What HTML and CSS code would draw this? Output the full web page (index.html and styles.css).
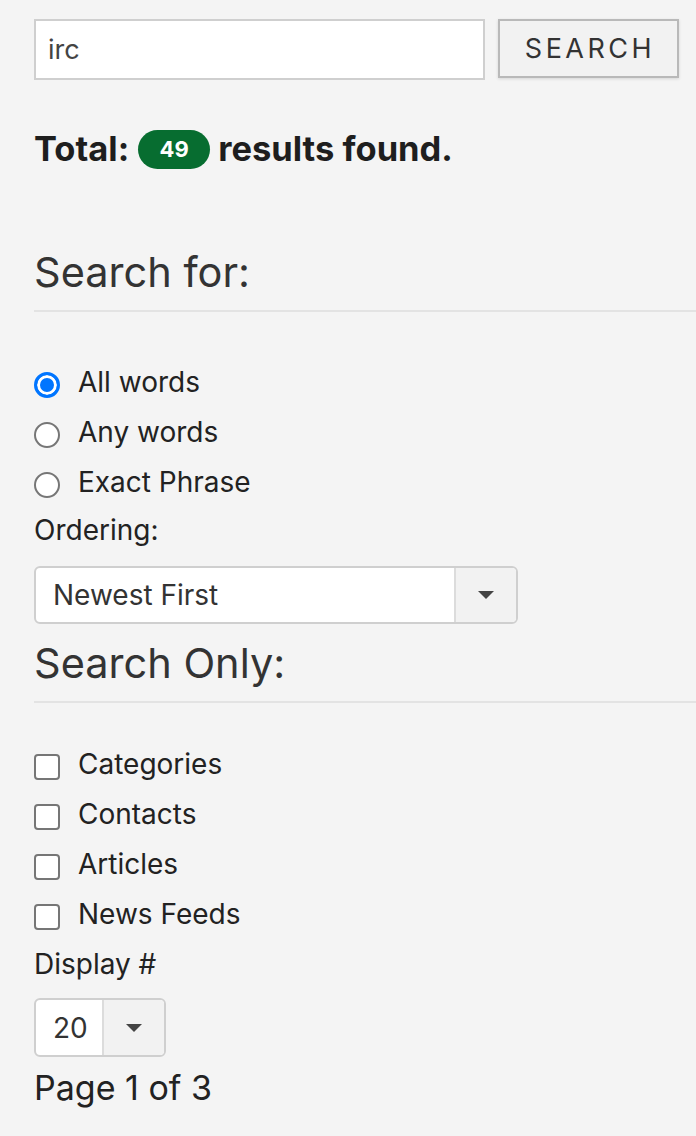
FILE: index.html
```html
<!DOCTYPE html>
<html lang="en">
<head>
<meta charset="utf-8">
<title>Search</title>
<link rel="stylesheet" href="styles.css">
</head>
<body>
<div class="page">
  <form class="search-row">
    <input class="search-input" type="text" value="irc">
    <button class="search-btn" type="button">SEARCH</button>
  </form>

  <p class="total">Total: <span class="badge">49</span> results found.</p>

  <h2 class="section-title">Search for:</h2>
  <hr class="rule">

  <div class="options first">
    <label class="opt"><span class="radio checked"></span>All words</label>
    <label class="opt"><span class="radio"></span>Any words</label>
    <label class="opt"><span class="radio"></span>Exact Phrase</label>
  </div>

  <div class="field-label">Ordering:</div>
  <div class="select wide">
    <span class="select-value">Newest First</span>
    <span class="select-caret"><span class="tri"></span></span>
  </div>

  <h2 class="section-title only">Search Only:</h2>
  <hr class="rule">

  <div class="options second">
    <label class="opt"><span class="check"></span>Categories</label>
    <label class="opt"><span class="check"></span>Contacts</label>
    <label class="opt"><span class="check"></span>Articles</label>
    <label class="opt"><span class="check"></span>News Feeds</label>
  </div>

  <div class="field-label display">Display #</div>
  <div class="select narrow">
    <span class="select-value">20</span>
    <span class="select-caret"><span class="tri"></span></span>
  </div>

  <div class="pages">Page 1 of 3</div>
</div>
</body>
</html>
```

FILE: styles.css
```css
html, body {
  margin: 0;
  padding: 0;
  background: #f4f4f4;
}

body {
  font-family: Inter, "Noto Sans", sans-serif;
  color: #222;
}

.page {
  padding: 19px 0 0 34px;
  overflow: hidden;
}

.search-row {
  display: flex;
  gap: 13px;
  align-items: flex-start;
  margin: 0;
}

.search-input {
  box-sizing: border-box;
  width: 451px;
  height: 61px;
  border: 2px solid #cfcfcf;
  background: #fff;
  font-family: Inter, sans-serif;
  font-size: 27px;
  color: #444;
  padding: 0 12px;
  outline: none;
}

.search-btn {
  box-sizing: border-box;
  width: 181px;
  height: 59px;
  border: 2px solid #b9b9b9;
  background: #f2f2f2;
  font-family: Inter, sans-serif;
  font-size: 27px;
  letter-spacing: 3.5px;
  text-indent: 3px;
  color: #333;
  box-shadow: 0 1px 3px rgba(0, 0, 0, 0.12);
  padding: 0;
}

.total {
  margin: 49px 0 0;
  font-size: 34.5px;
  line-height: 40px;
  font-weight: 700;
  color: #1e1e1e;
  display: flex;
  align-items: center;
}

.badge {
  display: inline-flex;
  align-items: center;
  justify-content: center;
  width: 72px;
  height: 39px;
  border-radius: 20px;
  background: #076d30;
  color: #fff;
  font-size: 22px;
  font-weight: 700;
  margin: 0 8px 0 9px;
}

.section-title {
  margin: 79px 0 0;
  font-size: 41.5px;
  line-height: 48px;
  font-weight: 400;
  color: #333;
}

.section-title.only {
  margin-top: 15px;
}

.rule {
  border: 0;
  border-top: 2px solid #e3e3e3;
  margin: 14px 0 0;
}

.options.first {
  margin-top: 48px;
}

.options.second {
  margin-top: 39px;
}

.opt {
  box-sizing: border-box;
  display: flex;
  align-items: center;
  height: 50px;
  padding-bottom: 6px;
  font-size: 28px;
  color: #222;
}

.radio {
  box-sizing: border-box;
  width: 26px;
  height: 26px;
  border-radius: 50%;
  border: 2px solid #767676;
  background: #fff;
  margin: 6px 18px 0 0;
  flex: none;
}

.radio.checked {
  border: 3px solid #0075ff;
  background: #0075ff;
  box-shadow: inset 0 0 0 3px #fff;
}

.check {
  box-sizing: border-box;
  width: 26px;
  height: 26px;
  border-radius: 4px;
  border: 2px solid #767676;
  background: #fff;
  margin: 6px 18px 0 0;
  flex: none;
}

.field-label {
  font-size: 28px;
  line-height: 40px;
  color: #222;
}

.field-label.display {
  margin-top: 2px;
}

.select {
  box-sizing: border-box;
  display: flex;
  height: 58px;
  border: 2px solid #cfcfcf;
  border-radius: 6px;
  background: #fff;
  overflow: hidden;
  margin-top: 16px;
}

.select.wide {
  width: 484px;
}

.select.narrow {
  width: 132px;
  height: 59px;
  margin-top: 14px;
}

.select-value {
  flex: 1;
  display: flex;
  align-items: center;
  padding-left: 17px;
  font-size: 28px;
  color: #333;
}

.select-caret {
  flex: none;
  width: 60px;
  border-left: 2px solid #dcdcdc;
  background: #f2f2f2;
  display: flex;
  align-items: center;
  justify-content: center;
}

.tri {
  width: 0;
  height: 0;
  border-left: 8px solid transparent;
  border-right: 8px solid transparent;
  border-top: 8px solid #444;
}

.pages {
  font-size: 34px;
  line-height: 40px;
  color: #222;
  margin-top: 11px;
}
```
